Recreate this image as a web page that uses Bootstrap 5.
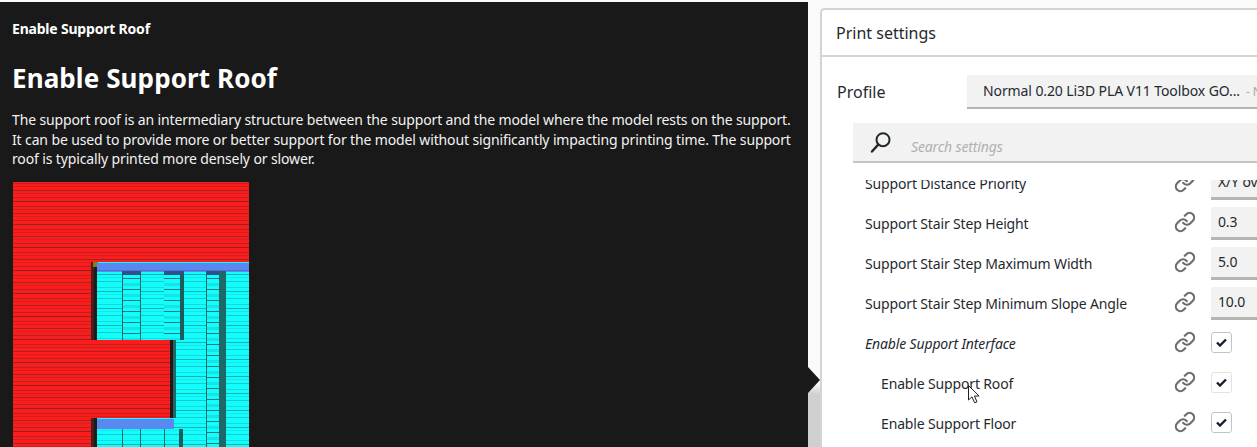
<!DOCTYPE html>
<html lang="en">
<head>
<meta charset="utf-8">
<link href="https://cdn.jsdelivr.net/npm/bootstrap@5.3.0/dist/css/bootstrap.min.css" rel="stylesheet">
<style>
html,body{height:447px;overflow:hidden}
body{font-family:"Noto Sans",sans-serif;background:#fafafa;color:#1f2a30;font-size:14px;padding-top:2px}
.stage{height:445px;position:relative;overflow:hidden}
.tip-panel{width:808px;flex:none;background:#191919;color:#fff;padding:15px 12px 0;overflow:hidden}
.tip-title{font-size:14px;font-weight:700;line-height:24px;margin:0;letter-spacing:-.2px}
.tip-head{font-size:26px;font-weight:700;line-height:36px;margin:19px 0 14px;letter-spacing:.1px}
.tip-body{font-size:14px;line-height:19.5px;margin:0 0 13.5px;color:#f2f2f2;width:785px;letter-spacing:-.13px}
.tip-pic{display:block;width:236px;height:270px;margin-left:1px}
.tip-arrow{position:absolute;left:808px;top:365px;width:12px;height:26px}
.gutter{width:12px;flex:none;background:linear-gradient(#fafafa 0,#fafafa 382px,#d0d0d0 392px)}
.side{flex:1;min-width:0;padding-top:6px}
.side-card{height:460px;width:460px;background:#fff;border:2px solid #d4d4d4;border-right:0;border-radius:5px 0 0 0}
.side-head{height:47px;padding-left:14px;font-size:16px;line-height:46px;border-bottom:2px solid #d4d4d4;color:#1f2a30}
.profile-row{height:36px;margin-top:17px;padding-left:15px;gap:0}
.profile-label{width:130px;flex:none;font-size:16px}
.profile-pick{width:300px;flex:none;height:34px;background:#f2f2f2;border-bottom:2px solid #b4b4b4;padding-left:16px;line-height:32px;white-space:nowrap;overflow:hidden;letter-spacing:-.1px}
.profile-pick span{color:#a8a8a8;font-size:12px;margin-left:6px}
.search-row{height:40px;margin-left:31px;width:420px;margin-top:13px;background:#f2f2f2;border-bottom:2px solid #c4c4c4;padding-left:17px;gap:19px}
.search-hint{font-style:italic;color:#b0b0b0;font-size:14px;position:relative;top:4px;letter-spacing:-.13px}
.set-scroll{height:280px;overflow:hidden;margin-top:17px;position:relative}
.set-list{margin-top:-17px}
.set-row{height:40px;padding-left:43px;position:relative;letter-spacing:-.15px}
.set-row.sub{padding-left:59px}
.set-name{width:309px;flex:none;white-space:nowrap}
.set-row.sub .set-name{width:293px}
.set-link{width:22px;height:22px;flex:none;margin-right:15px;margin-bottom:2px}
.set-field{width:60px;height:33px;background:#f2f2f2;border-bottom:3px solid #b4b4b4;padding-left:7px;line-height:30px;white-space:nowrap;overflow:hidden}
.set-check{width:21px;height:21px;border:1px solid #c4c4c4;border-radius:3px;background:#fff;margin-bottom:1px}
.set-check.soft{border-color:#e2e2e2}
.pointer-mark{position:absolute;left:968px;top:383px;width:13px;height:20px}
</style>
</head>
<body>
<div class="stage d-flex">
  <section class="tip-panel">
    <p class="tip-title">Enable Support Roof</p>
    <h1 class="tip-head">Enable Support Roof</h1>
    <p class="tip-body">The support roof is an intermediary structure between the support and the model where the model rests on the support. It can be used to provide more or better support for the model without significantly impacting printing time. The support roof is typically printed more densely or slower.</p>
    <svg class="tip-pic" viewBox="0 0 236 270" shape-rendering="crispEdges" aria-hidden="true">
      <defs>
        <pattern id="redbands" width="236" height="23" patternUnits="userSpaceOnUse">
          <rect width="236" height="23" fill="#fb1c1c"/>
          <rect y="1" width="236" height="1" fill="#c02020"/>
          <rect y="4" width="236" height="1" fill="#d81c1c"/>
          <rect y="8" width="236" height="1" fill="#a02626"/>
          <rect y="11" width="236" height="1" fill="#e01c1c"/>
          <rect y="15" width="236" height="1" fill="#b82222"/>
          <rect y="19" width="236" height="1" fill="#8f2222"/>
        </pattern>
        <pattern id="cyanbands" width="236" height="17" patternUnits="userSpaceOnUse">
          <rect width="236" height="17" fill="#14fdfd"/>
          <rect y="3" width="236" height="1" fill="#14dcdc"/>
          <rect y="7" width="236" height="1" fill="#17b0b0"/>
          <rect y="10" width="236" height="1" fill="#14e8e8"/>
          <rect y="14" width="236" height="1" fill="#19c8c8"/>
        </pattern>
        <pattern id="cyanbold" width="236" height="11" patternUnits="userSpaceOnUse">
          <rect width="236" height="11" fill="#14fdfd"/>
          <rect y="2" width="236" height="3" fill="#14e4e4"/>
          <rect y="8" width="236" height="1" fill="#1a7a7a"/>
        </pattern>
      </defs>
      <rect width="236" height="270" fill="url(#redbands)"/>
      <rect x="78" y="80" width="158" height="190" fill="url(#cyanbands)"/>
      <rect x="109" y="89" width="18" height="69" fill="url(#cyanbold)"/>
      <rect x="151" y="89" width="16" height="69" fill="url(#cyanbold)"/>
      <rect x="193" y="89" width="13" height="181" fill="url(#cyanbold)"/>
      <rect x="78" y="80" width="6" height="79" fill="#1c1c1c"/>
      <rect x="78" y="80" width="3" height="79" fill="#452020"/>
      <rect x="80" y="80" width="5" height="5" fill="#85801a"/>
      <rect x="84" y="81" width="152" height="9" fill="#5a88f0"/>
      <rect x="84" y="88" width="152" height="1" fill="#4a74d0"/>
      <rect x="109" y="89" width="1" height="69" fill="#1a6a6a"/>
      <rect x="127" y="89" width="1" height="69" fill="#1a6a6a"/>
      <rect x="167" y="89" width="4" height="69" fill="#1c5c5c"/>
      <rect x="109" y="89" width="19" height="4" fill="#30508a"/>
      <rect x="151" y="89" width="20" height="4" fill="#30508a"/>
      <rect x="193" y="89" width="20" height="4" fill="#30508a"/>
      <rect x="193" y="89" width="1" height="181" fill="#1a6a6a"/>
      <rect x="206" y="89" width="7" height="181" fill="#1f6868"/>
      <rect y="158" width="157" height="78" fill="url(#redbands)"/>
      <rect x="157" y="158" width="3" height="78" fill="#1c1c1c"/>
      <rect x="160" y="158" width="3" height="78" fill="#1f6868"/>
      <rect x="78" y="236" width="6" height="34" fill="#1c1c1c"/>
      <rect x="78" y="236" width="3" height="34" fill="#452020"/>
      <rect x="84" y="237" width="77" height="10" fill="#5a88f0"/>
      <rect x="109" y="247" width="1" height="23" fill="#1a6a6a"/>
      <rect x="127" y="247" width="1" height="23" fill="#1a6a6a"/>
      <rect x="151" y="247" width="1" height="23" fill="#1a6a6a"/>
      <rect x="166" y="247" width="4" height="23" fill="#1c5c5c"/>
    </svg>
  </section>
  <div class="gutter"></div>
  <svg class="tip-arrow" viewBox="0 0 12 26" aria-hidden="true"><path d="M0 0 12 13 0 26z" fill="#191919"/></svg>
  <section class="side">
    <div class="side-card">
      <div class="side-head">Print settings</div>
      <div class="profile-row d-flex align-items-center">
        <div class="profile-label">Profile</div>
        <div class="profile-pick">Normal 0.20 Li3D PLA V11 Toolbox GO...<span>- Normal</span></div>
      </div>
      <div class="search-row d-flex align-items-center">
        <svg width="22" height="22" viewBox="0 0 22 22" aria-hidden="true"><circle cx="13" cy="8.7" r="6.5" fill="none" stroke="#1f2a30" stroke-width="2"/><path d="M8.2 13.6 2 20.5" stroke="#1f2a30" stroke-width="2.4" stroke-linecap="round"/></svg>
        <span class="search-hint">Search settings</span>
      </div>
      <div class="set-scroll">
        <div class="set-list">
          <div class="set-row d-flex align-items-center"><div class="set-name">Support Distance Priority</div><svg class="set-link" viewBox="0 0 24 24" aria-hidden="true"><use href="#chain"/></svg><div class="set-field">X/Y overrides Z</div></div>
          <div class="set-row d-flex align-items-center"><div class="set-name">Support Stair Step Height</div><svg class="set-link" viewBox="0 0 24 24" aria-hidden="true"><use href="#chain"/></svg><div class="set-field">0.3</div></div>
          <div class="set-row d-flex align-items-center"><div class="set-name">Support Stair Step Maximum Width</div><svg class="set-link" viewBox="0 0 24 24" aria-hidden="true"><use href="#chain"/></svg><div class="set-field">5.0</div></div>
          <div class="set-row d-flex align-items-center"><div class="set-name">Support Stair Step Minimum Slope Angle</div><svg class="set-link" viewBox="0 0 24 24" aria-hidden="true"><use href="#chain"/></svg><div class="set-field">10.0</div></div>
          <div class="set-row d-flex align-items-center"><div class="set-name fst-italic">Enable Support Interface</div><svg class="set-link" viewBox="0 0 24 24" aria-hidden="true"><use href="#chain"/></svg><div class="set-check d-flex align-items-center justify-content-center"><svg width="11" height="9" viewBox="0 0 11 9" aria-hidden="true"><use href="#tick"/></svg></div></div>
          <div class="set-row sub d-flex align-items-center"><div class="set-name">Enable Support Roof</div><svg class="set-link" viewBox="0 0 24 24" aria-hidden="true"><use href="#chain"/></svg><div class="set-check soft d-flex align-items-center justify-content-center"><svg width="11" height="9" viewBox="0 0 11 9" aria-hidden="true"><use href="#tick"/></svg></div></div>
          <div class="set-row sub d-flex align-items-center"><div class="set-name">Enable Support Floor</div><svg class="set-link" viewBox="0 0 24 24" aria-hidden="true"><use href="#chain"/></svg><div class="set-check d-flex align-items-center justify-content-center"><svg width="11" height="9" viewBox="0 0 11 9" aria-hidden="true"><use href="#tick"/></svg></div></div>
        </div>
      </div>
    </div>
  </section>
  <svg class="pointer-mark" viewBox="0 0 13 20" aria-hidden="true"><path d="M.5.5V15l3.5-3.2 2.6 6 2.4-1-2.6-5.8h4.7z" fill="#fff" stroke="#222" stroke-width="1"/></svg>
</div>
<svg width="0" height="0" class="position-absolute" aria-hidden="true">
  <defs>
    <g id="chain" fill="none" stroke="#6e6e6e" stroke-width="2.4" stroke-linecap="round">
      <path d="M10 13a5 5 0 0 0 7.54.54l3-3a5 5 0 0 0-7.07-7.07l-1.72 1.71"/>
      <path d="M14 11a5 5 0 0 0-7.54-.54l-3 3a5 5 0 0 0 7.07 7.07l1.71-1.71"/>
    </g>
    <path id="tick" d="M1 4.5 4 7.5 10 1.5" fill="none" stroke="#12202c" stroke-width="2.4"/>
  </defs>
</svg>
<script src="https://cdn.jsdelivr.net/npm/bootstrap@5.3.0/dist/js/bootstrap.bundle.min.js"></script>
</body>
</html>
